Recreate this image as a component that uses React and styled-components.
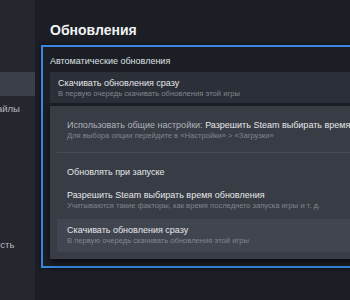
import React from 'react';
import styled, { createGlobalStyle } from 'styled-components';

const GlobalStyle = createGlobalStyle`
  html, body {
    margin: 0;
    padding: 0;
    background: #1b1e25;
    overflow: hidden;
  }
  body {
    font-family: "Liberation Sans", Arial, sans-serif;
  }
`;

const sidebarItems = [
  { label: 'Общие' },
  { label: 'Совместимость' },
  { label: 'Обновления', active: true },
  { label: 'Установленные файлы' },
  { label: 'Бета-версии' },
  { label: 'Контроллер' },
  { label: 'DLC' },
  { label: 'Облако' },
  { label: 'Конфиденциальность', gap: true },
];

var App = () => (
  <Page>
    <GlobalStyle />
    <Sidebar>
      <NavList>
        {sidebarItems.map((item) => (
          <NavItem key={item.label} active={item.active} gap={item.gap}>
            {item.label}
          </NavItem>
        ))}
      </NavList>
    </Sidebar>

    <Main>
      <Title>Обновления</Title>

      <FocusBox>
        <SectionLabel>Автоматические обновления</SectionLabel>

        <DropdownRow>
          <OptionTitle>Скачивать обновления сразу</OptionTitle>
          <OptionDesc>В первую очередь скачивать обновления этой игры</OptionDesc>
        </DropdownRow>

        <Menu>
          <MenuItem>
            <OptionTitle>
              <Muted>Использовать общие настройки: </Muted>
              Разрешить Steam выбирать время обновления
            </OptionTitle>
            <OptionDesc>Для выбора опции перейдите в «Настройки» &gt; «Загрузки»</OptionDesc>
          </MenuItem>
          <Separator />
          <MenuItem single>
            <OptionTitle>Обновлять при запуске</OptionTitle>
          </MenuItem>
          <MenuItem>
            <OptionTitle>Разрешить Steam выбирать время обновления</OptionTitle>
            <OptionDesc>Учитываются такие факторы, как время последнего запуска игры и т. д.</OptionDesc>
          </MenuItem>
          <MenuItem selected>
            <OptionTitle>Скачивать обновления сразу</OptionTitle>
            <OptionDesc>В первую очередь скачивать обновления этой игры</OptionDesc>
          </MenuItem>
        </Menu>
      </FocusBox>
    </Main>
  </Page>
);

//styled components

const Page = styled.div`
  display: flex;
  width: 350px;
  height: 300px;
  overflow: hidden;
  background: #1b1e25;
`;

const Sidebar = styled.div`
  flex: 0 0 35px;
  background: #24272e;
  overflow: hidden;
`;

const NavList = styled.div`
  display: flex;
  flex-direction: column;
  padding-top: 24px;
`;

const NavItem = styled.div`
  flex: 0 0 24px;
  display: flex;
  align-items: center;
  margin-top: ${(p) => (p.gap ? '16px' : '0')};
  text-indent: -82px;
  white-space: nowrap;
  font-size: 9.5px;
  color: #b7bbc0;
  background: ${(p) => (p.active ? '#3b3f48' : 'transparent')};
`;

const Main = styled.div`
  flex: 1;
  min-width: 0;
  padding: 20px 0 0 6px;
  overflow: hidden;
`;

const Title = styled.div`
  height: 20px;
  line-height: 20px;
  padding-left: 9px;
  font-size: 14px;
  font-weight: bold;
  color: #f0f2f4;
`;

const FocusBox = styled.div`
  margin-top: 5px;
  width: 420px;
  border: 2px solid #3a86dc;
  padding: 7px 0 7px 7px;
  box-sizing: border-box;
  box-shadow: 0 0 4px rgba(0, 0, 0, 0.6);
`;

const SectionLabel = styled.div`
  height: 14px;
  line-height: 14px;
  font-size: 9px;
  color: #dfe1e3;
  white-space: nowrap;
`;

const DropdownRow = styled.div`
  margin-top: 4px;
  padding: 5px 8px 4px;
  background: #2b2f37;
`;

const OptionTitle = styled.div`
  height: 12px;
  line-height: 12px;
  font-size: 9px;
  color: #e6e8ea;
  white-space: nowrap;
`;

const OptionDesc = styled.div`
  height: 10px;
  line-height: 10px;
  font-size: 7.6px;
  color: #80868e;
  white-space: nowrap;
`;

const Muted = styled.span`
  color: #b0b4ba;
`;

const Menu = styled.div`
  margin-top: 3px;
  padding: 8px 0 7px 7px;
  background: #383c45;
  box-shadow: 0 4px 6px rgba(0, 0, 0, 0.55);
  display: flex;
  flex-direction: column;
  gap: 2px;
`;

const MenuItem = styled.div`
  padding: ${(p) => (p.single ? '5px 10px 4px' : '5px 10px 6px')};
  background: ${(p) => (p.selected ? '#41454f' : 'transparent')};
`;

const Separator = styled.div`
  height: 1px;
  margin: 3px 0 6px;
  background: #474b55;
`;

export default App;
